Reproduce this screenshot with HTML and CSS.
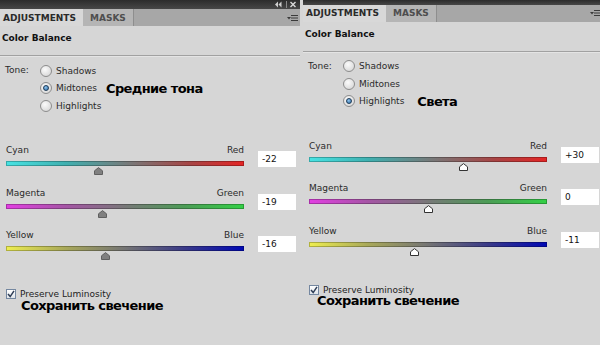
FILE: index.html
```html
<!DOCTYPE html>
<html lang="ru">
<head>
    <meta charset="UTF-8">
    <title>Color Balance</title>
    <link rel="stylesheet" href="styles.css">
</head>
<body>
<div class="screen">

    <!-- Midtones panel -->
    <section class="panel">
        <div class="panel-inner">
            <div class="titlebar">
                <svg class="panel-controls" width="22" height="7" viewBox="0 0 22 7">
                    <polygon points="3,0.5 0,3.5 3,6.5" fill="#cfcfcf"/>
                    <polygon points="6.5,0.5 3.5,3.5 6.5,6.5" fill="#cfcfcf"/>
                    <line x1="11.5" y1="0" x2="11.5" y2="7" stroke="#8a8a8a"/>
                    <path d="M15.5 1 L20.5 6 M20.5 1 L15.5 6" stroke="#d8d8d8" stroke-width="1.4"/>
                </svg>
            </div>
            <div class="tabs">
                <span class="tab active">ADJUSTMENTS</span>
                <span class="tab">MASKS</span>
                <span class="tab-fill">
                    <svg class="menu-icon" width="11" height="8" viewBox="0 0 11 8">
                        <polygon points="0,3 4,3 2,5.5" fill="#3a3a3a"/>
                        <path d="M4 1.5 H11 M4 4 H11 M4 6.5 H11" stroke="#3a3a3a" stroke-width="1"/>
                    </svg>
                </span>
            </div>
            <div class="heading">Color Balance</div>

            <div class="body">
                <div class="tone">
                    <span class="tone-label">Tone:</span>
                    <div class="radios">
                        <div class="radio"><span class="dot"></span>Shadows</div>
                        <div class="radio checked"><span class="dot"></span>Midtones<span class="note">Средние тона</span></div>
                        <div class="radio"><span class="dot"></span>Highlights</div>
                    </div>
                </div>

                <div class="sliders">
                    <div class="slider">
                        <div class="track-wrap">
                            <div class="ends"><span>Cyan</span><span>Red</span></div>
                            <div class="track cyan-red"><span class="thumb" style="left: 39%"></span></div>
                        </div>
                        <div class="value">-22</div>
                    </div>
                    <div class="slider">
                        <div class="track-wrap">
                            <div class="ends"><span>Magenta</span><span>Green</span></div>
                            <div class="track magenta-green"><span class="thumb" style="left: 40.5%"></span></div>
                        </div>
                        <div class="value">-19</div>
                    </div>
                    <div class="slider">
                        <div class="track-wrap">
                            <div class="ends"><span>Yellow</span><span>Blue</span></div>
                            <div class="track yellow-blue"><span class="thumb" style="left: 42%"></span></div>
                        </div>
                        <div class="value">-16</div>
                    </div>
                </div>

                <div class="preserve">
                    <span class="checkbox">
                        <svg width="8" height="8" viewBox="0 0 8 8"><path d="M1 4 L3.2 6.6 L7 0.8" fill="none" stroke="#2e3d55" stroke-width="1.5"/></svg>
                    </span>
                    Preserve Luminosity
                </div>
                <div class="note note-bottom">Сохранить свечение</div>
            </div>
        </div>
    </section>

    <!-- Highlights panel -->
    <section class="panel panel-right">
        <div class="panel-inner">
            <div class="titlebar"></div>
            <div class="tabs">
                <span class="tab active">ADJUSTMENTS</span>
                <span class="tab">MASKS</span>
                <span class="tab-fill">
                    <svg class="menu-icon" width="11" height="8" viewBox="0 0 11 8">
                        <polygon points="0,3 4,3 2,5.5" fill="#3a3a3a"/>
                        <path d="M4 1.5 H11 M4 4 H11 M4 6.5 H11" stroke="#3a3a3a" stroke-width="1"/>
                    </svg>
                </span>
            </div>
            <div class="heading">Color Balance</div>

            <div class="body">
                <div class="tone">
                    <span class="tone-label">Tone:</span>
                    <div class="radios">
                        <div class="radio"><span class="dot"></span>Shadows</div>
                        <div class="radio"><span class="dot"></span>Midtones</div>
                        <div class="radio checked"><span class="dot"></span>Highlights<span class="note note-short">Света</span></div>
                    </div>
                </div>

                <div class="sliders">
                    <div class="slider">
                        <div class="track-wrap">
                            <div class="ends"><span>Cyan</span><span>Red</span></div>
                            <div class="track cyan-red"><span class="thumb active" style="left: 65%"></span></div>
                        </div>
                        <div class="value">+30</div>
                    </div>
                    <div class="slider">
                        <div class="track-wrap">
                            <div class="ends"><span>Magenta</span><span>Green</span></div>
                            <div class="track magenta-green"><span class="thumb active" style="left: 50%"></span></div>
                        </div>
                        <div class="value">0</div>
                    </div>
                    <div class="slider">
                        <div class="track-wrap">
                            <div class="ends"><span>Yellow</span><span>Blue</span></div>
                            <div class="track yellow-blue"><span class="thumb active" style="left: 44.5%"></span></div>
                        </div>
                        <div class="value">-11</div>
                    </div>
                </div>

                <div class="preserve">
                    <span class="checkbox">
                        <svg width="8" height="8" viewBox="0 0 8 8"><path d="M1 4 L3.2 6.6 L7 0.8" fill="none" stroke="#2e3d55" stroke-width="1.5"/></svg>
                    </span>
                    Preserve Luminosity
                </div>
                <div class="note note-bottom">Сохранить свечение</div>
            </div>
        </div>
    </section>

</div>
</body>
</html>
```

FILE: styles.css
```css
body {
    margin: 0;
    padding: 0;
    background-color: #d6d6d6;
    font-family: "DejaVu Sans", Verdana, sans-serif;
    font-size: 9px;
    color: #2a2a2a;
}

.screen {
    display: flex;
    width: 600px;
    height: 345px;
    overflow: hidden;
}

.panel {
    flex: 0 0 300px;
    width: 300px;
    height: 345px;
    background-color: #d6d6d6;
    overflow: hidden;
}

.panel-inner {
    width: 300px;
}

.panel-right .panel-inner {
    margin-left: 3px;
}

/* dark strip at the top */
.titlebar {
    height: 9px;
    background: linear-gradient(#2c2c2c, #474747);
    display: flex;
    justify-content: flex-end;
    align-items: center;
    padding-right: 3px;
}

.panel-right .titlebar {
    height: 4.5px;
}

/* tabs */
.tabs {
    display: flex;
    height: 17px;
    background-color: #a7a7a7;
}

.tab {
    display: flex;
    align-items: center;
    font-weight: bold;
    color: #4e4e4e;
    background-color: #b5b5b5;
    padding: 0 7px 0 7px;
    border-right: 1px solid #8e8e8e;
}

.tab.active {
    color: #2a2a2a;
    background-color: #d8d8d8;
    padding: 0 7px 0 3px;
    border-right: none;
}

.tab-fill {
    flex: 1;
    display: flex;
    justify-content: flex-end;
    align-items: center;
    padding-right: 2px;
}

.heading {
    height: 30px;
    box-sizing: border-box;
    padding: 6px 0 0 2px;
    line-height: 12px;
    font-weight: bold;
    color: #111;
    border-bottom: 1px solid #a1a1a1;
    box-shadow: 0 1px 0 #e4e4e4;
}

.body {
    padding: 6px 0 0 6px;
}

/* tone radios */
.tone {
    display: flex;
}

.tone-label {
    width: 35px;
    line-height: 17.5px;
    margin-left: -1px;
}

.radio {
    display: flex;
    align-items: center;
    height: 17.5px;
}

.dot {
    width: 10px;
    height: 10px;
    border-radius: 50%;
    border: 1px solid #8d8d8d;
    background: radial-gradient(circle at 40% 35%, #fbfbfb, #d0d0d0);
    margin-right: 4px;
    position: relative;
}

.radio.checked .dot::after {
    content: '';
    position: absolute;
    left: 2px;
    top: 2px;
    width: 4px;
    height: 4px;
    border-radius: 50%;
    border: 1px solid #1d3b58;
    background: radial-gradient(circle at 40% 35%, #8fc4ee, #2a6aa4);
}

.note {
    font-size: 13px;
    font-weight: bold;
    letter-spacing: -0.6px;
    color: #000;
    margin-left: 9px;
}

.note-short {
    margin-left: 13px;
}

/* sliders */
.sliders {
    margin-top: 29.5px;
}

.slider {
    display: flex;
    gap: 14px;
    height: 42.5px;
}

.track-wrap {
    width: 238px;
}

.ends {
    display: flex;
    justify-content: space-between;
    line-height: 12px;
    margin-bottom: 5px;
}

.track {
    position: relative;
    height: 5px;
    box-shadow: inset 0 0 0 1px rgba(0, 0, 0, 0.25);
}

.cyan-red {
    background: linear-gradient(to right, #47e3e3, #3fb0b0 25%, #787878 52%, #a84444 78%, #e42525);
}

.magenta-green {
    background: linear-gradient(to right, #e23ee2, #a555a5 25%, #787878 50%, #4c9c56 75%, #33d046);
}

.yellow-blue {
    background: linear-gradient(to right, #eeee50, #a8a85a 25%, #747474 50%, #3a3a88 75%, #0008b4);
}

.thumb {
    position: absolute;
    top: 100%;
    margin-top: 1px;
    margin-left: -4.5px;
    width: 9px;
    height: 8px;
    background: url("data:image/svg+xml,%3Csvg xmlns='http://www.w3.org/2000/svg' width='9' height='8'%3E%3Cpolygon points='0.5,7.5 0.5,3.8 4.5,0.6 8.5,3.8 8.5,7.5' fill='%23808080' stroke='%23606060'/%3E%3C/svg%3E");
}

.thumb.active {
    background: url("data:image/svg+xml,%3Csvg xmlns='http://www.w3.org/2000/svg' width='9' height='8'%3E%3Cpolygon points='0.5,7.5 0.5,3.8 4.5,0.6 8.5,3.8 8.5,7.5' fill='%23ffffff' stroke='%23333333'/%3E%3C/svg%3E");
}

.value {
    width: 34px;
    height: 16px;
    margin-top: 7px;
    padding-left: 4px;
    line-height: 16px;
    background-color: #fff;
    color: #111;
}

/* preserve luminosity */
.preserve {
    display: flex;
    align-items: center;
    gap: 4px;
    margin-top: 16.5px;
    line-height: 12px;
    color: #222;
}

.checkbox {
    display: flex;
    align-items: center;
    justify-content: center;
    width: 8px;
    height: 8px;
    border: 1px solid #7487a0;
    background: linear-gradient(#ffffff, #dfe4ea);
}

.note-bottom {
    margin: -1.5px 0 0 15px;
    line-height: 14px;
}

.panel-right .note-bottom {
    margin-left: 8px;
}
```
